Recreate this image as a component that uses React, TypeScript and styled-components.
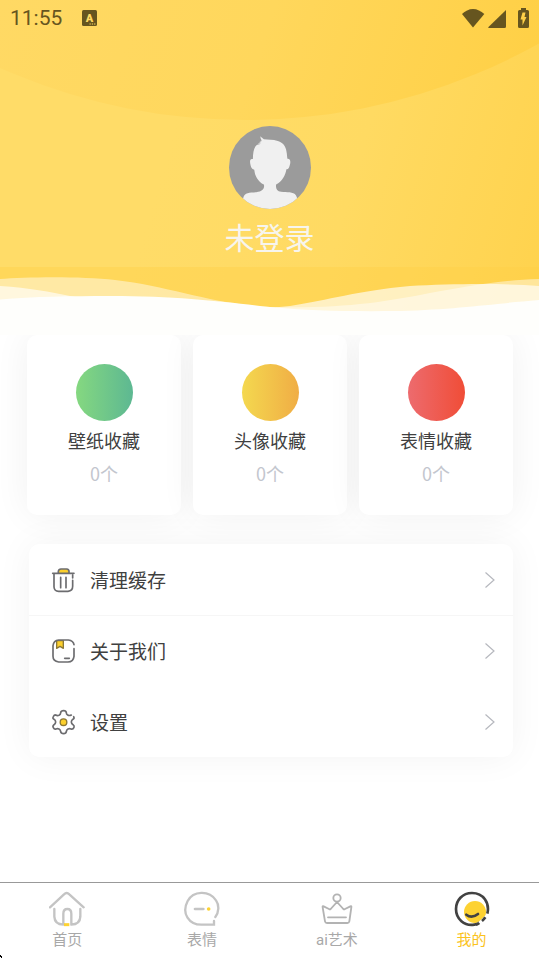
import React from "react";
import styled, { createGlobalStyle } from "styled-components";

const GlobalStyle = createGlobalStyle`
  *, *::before, *::after { box-sizing: border-box; }
  body {
    margin: 0;
    background: #fff;
    font-family: "Noto Sans CJK SC", sans-serif;
  }
  button {
    margin: 0;
    padding: 0;
    border: 0;
    background: none;
    color: inherit;
    font: inherit;
    cursor: pointer;
  }
  svg { display: block; flex: none; }
`;

const Page = styled.div`
  position: relative;
  display: flex;
  flex-direction: column;
  min-height: 100vh;
`;

const Hero = styled.header`
  position: relative;
  z-index: 1;
  padding-bottom: 79px;
  background: #fefefc;
`;

const HeroArt = styled.svg`
  position: absolute;
  inset: 0;
  width: 100%;
  height: 100%;
`;

const StatusBar = styled.div`
  position: relative;
  display: flex;
  align-items: center;
  height: 36px;
  padding: 0 10px;
  color: #66551f;
  font-family: Roboto, sans-serif;
  font-size: 21px;
  line-height: 36px;
`;

const Clock = styled.time`
  margin-right: 20px;
`;

const StatusIcons = styled.div`
  display: flex;
  align-items: center;
  margin-left: auto;
`;

const Profile = styled.button`
  position: relative;
  display: flex;
  flex-direction: column;
  align-items: center;
  gap: 7px;
  margin: 90px auto 0;
  color: #f7f5ee;
  font-size: 30px;
  line-height: 40px;
`;

const Content = styled.main`
  flex: 1;
  padding: 0 26px 40px 27px;
`;

const Cards = styled.section`
  display: grid;
  grid-template-columns: repeat(3, 1fr);
  gap: 12px;
`;

const Card = styled.button`
  display: flex;
  flex-direction: column;
  align-items: center;
  padding: 29px 0 25px;
  border-radius: 10px;
  background: #fff;
  box-shadow: 0 0 36px rgba(0, 0, 0, 0.06);
`;

const Dot = styled.span<{ $from: string; $to: string }>`
  width: 57px;
  height: 57px;
  margin-bottom: 3px;
  border-radius: 50%;
  background: linear-gradient(to right, ${(p) => p.$from}, ${(p) => p.$to});
`;

const CardTitle = styled.span`
  color: #404040;
  font-size: 18px;
  line-height: 32px;
`;

const CardCount = styled.span`
  color: #c3c6ce;
  font-size: 18px;
  line-height: 34px;
`;

const Menu = styled.section`
  margin: 29px 0 0 2px;
  border-radius: 10px;
  background: #fff;
  box-shadow: 0 0 36px rgba(0, 0, 0, 0.05);
`;

const MenuRow = styled.button<{ $divided?: boolean }>`
  display: flex;
  align-items: center;
  gap: 13px;
  width: 100%;
  height: 71px;
  padding: 0 17px 0 22px;
  border-top: ${(p) => (p.$divided ? "1px solid #f6f6f6" : "0")};
  color: #404040;
  font-size: 19px;
  line-height: 28px;
  text-align: left;
`;

const MenuLabel = styled.span`
  flex: 1;
`;

const TabBar = styled.nav`
  display: grid;
  grid-template-columns: repeat(4, 1fr);
  padding: 8px 0 9px;
  border-top: 1px solid #999;
  background: #fff;
`;

const Tab = styled.button<{ $active?: boolean }>`
  display: flex;
  flex-direction: column;
  align-items: center;
  gap: 4px;
  color: ${(p) => (p.$active ? "#fbc31c" : "#a8a8a8")};
  font-family: Roboto, "Noto Sans CJK SC", sans-serif;
  font-size: 15px;
  line-height: 18px;
`;

const CornerMark = styled.svg`
  position: absolute;
  left: 0;
  bottom: 0;
`;

const HeroBackground = () => (
  <HeroArt viewBox="0 0 539 335" preserveAspectRatio="none" aria-hidden="true">
    <defs>
      <linearGradient id="base" gradientUnits="userSpaceOnUse" x1="170" y1="140" x2="620" y2="270">
        <stop offset="0" stopColor="#ffdc68" />
        <stop offset="0.4" stopColor="#ffda62" />
        <stop offset="1" stopColor="#ffd046" />
      </linearGradient>
      <linearGradient id="arc" gradientUnits="userSpaceOnUse" x1="0" y1="0" x2="500" y2="160">
        <stop offset="0" stopColor="#ffd964" />
        <stop offset="0.5" stopColor="#ffd75c" />
        <stop offset="1" stopColor="#ffd046" />
      </linearGradient>
    </defs>
    <path fill="url(#base)" d="M0 0H539V320H0Z" />
    <circle cx="245" cy="-483" r="603" fill="url(#arc)" />
    <path fill="#ffcf45" fillOpacity="0.4" d="M0 267H539V320H0Z" />
    <path
      fill="#fff"
      fillOpacity="0.45"
      d="M0 279C25 277 80 276 115 280C170 286 210 304 270 307C340 309 385 302 430 293C470 286 500 280 539 279V335H0Z"
    />
    <path
      fill="#fff"
      fillOpacity="0.64"
      d="M0 286C30 288 50 292 70 296C130 308 240 312 290 306C330 300 355 291 410 286C450 284 500 283 539 286V335H0Z"
    />
    <path
      fill="#fefefc"
      d="M0 299.500C35 296.500 70 296 110 296C180 296 225 302 270 307C310 311 350 311.500 400 311C460 309 490 304 539 300V335H0Z"
    />
  </HeroArt>
);

const Avatar = () => (
  <svg width="82" height="83" viewBox="88 46 247 251" preserveAspectRatio="none" aria-hidden="true">
    <defs>
      <clipPath id="round">
        <ellipse cx="211.500" cy="171.500" rx="123.500" ry="125.500" />
      </clipPath>
    </defs>
    <g clipPath="url(#round)">
      <path fill="#9b9b9b" d="M88 46H335V297H88Z" />
      <path
        fill="#f0f0f0"
        d="M183 77C186 81 189 83 193 86C205 88 220 86 235 91C252 96 259 108 261 122C263 132 263 138 264 145C274 144 274 155 271 165C269 174 266 178 261 177C258 196 248 214 230 223C228 234 232 243 245 245C262 247 282 244 290 256L294 266L300 300H122L131 263C135 246 150 248 170 246C190 244 196 234 193 223C176 214 166 198 164 178C156 177 154 170 152 160C150 148 153 144 160 146C160 130 162 115 168 107C173 102 178 102 184 100L175 99C179 97 183 96 186 94L180 92L187 90C184 86 182 82 183 77Z"
      />
    </g>
  </svg>
);

const KeyboardIcon = () => (
  <svg width="15" height="16" viewBox="0 0 15 16" aria-hidden="true">
    <rect width="15" height="16" rx="1.500" fill="#66551f" />
    <text x="7.500" y="11.500" textAnchor="middle" fontFamily="Roboto" fontWeight="900" fontSize="11" fill="#ffda63">
      A
    </text>
    <path stroke="#ffda63" strokeDasharray="1.300 1" d="M7.500 14H14" />
  </svg>
);

const SignalIcons = () => (
  <svg width="68" height="22" viewBox="461 6 68 22" fill="#66551f" aria-hidden="true">
    <path d="M473 26.500L462 13C465 10 469 8 473 8S481 10 484.300 13Z" />
    <path d="M506 9V25.500Q506 27 504.500 27H489Q487.500 27 488.500 26Z" />
    <path d="M521 9V7H526V9H527.500Q529 9 529 10.500V25.500Q529 27 527.500 27H519.500Q518 27 518 25.500V10.500Q518 9 519.500 9Z" />
    <path fill="#ffd148" d="M522.500 11.500H525.500L524.500 16H526.500L522.500 24.500V18.500H520.500Z" />
  </svg>
);

const TrashIcon = () => (
  <svg width="26" height="26" viewBox="93 94 78 78" fill="none" stroke="#6c6c6f" strokeWidth="5" strokeLinecap="round" aria-hidden="true">
    <path fill="#fcd02d" d="M115 112V107Q116 100 123 100H140Q147 101 147 107V112" />
    <path d="M98 113H162M102 116V154Q103 167 116 167H144Q158 166 158 152V134M158 127V118M122 125V156M138 125V156" />
  </svg>
);

const BookIcon = () => (
  <svg width="26" height="26" viewBox="93 309 78 78" fill="none" stroke="#6c6c6f" strokeWidth="5" strokeLinecap="round" aria-hidden="true">
    <path fill="#fcd02d" stroke="#8c7835" strokeWidth="4" strokeLinejoin="round" d="M110 317H130V340L120 334L110 340Z" />
    <path d="M162 341V364Q160 381 144 381H116Q99 379 99 364V332Q101 316 116 315H145Q160 317 162 329M134 370H148" />
  </svg>
);

const GearIcon = () => (
  <svg width="26" height="26" viewBox="93 522 78 78" fill="none" stroke="#6c6c6f" strokeWidth="5" strokeLinecap="round" strokeLinejoin="round" aria-hidden="true">
    <path d="M154 540Q148 543 143 540Q139 538 139 533Q138 527 131 527Q123 527 122 533Q122 538 117 541Q112 543 107 540Q103 539 100 545Q97 550 102 553Q107 556 107 561Q107 566 102 569Q97 573 100 578Q103 584 108 582Q113 580 117 582Q122 585 122 590Q123 596 131 596Q138 596 139 590Q139 585 144 582Q149 580 153 582Q159 584 162 577Q164 573 159 569Q154 566 154 561Q154 556 159 553Q164 550 161 545" />
    <circle cx="130.500" cy="561.500" r="10" fill="#fcd02d" stroke="#8c7835" strokeWidth="4" />
  </svg>
);

const Chevron = () => (
  <svg width="12" height="18" viewBox="0 0 12 18" fill="none" stroke="#b6b8be" strokeWidth="1.200" aria-hidden="true">
    <path d="M1.500 1.500L10 9L1.500 16.500" />
  </svg>
);

const HomeIcon = () => (
  <svg width="36" height="36" viewBox="147 63 108 108" fill="none" stroke="#c4c4c4" strokeWidth="7" strokeLinecap="round" strokeLinejoin="round" aria-hidden="true">
    <path d="M150 112L192 73Q200 65 208 73L251 112" />
    <path d="M163 117V140Q164 163 190 164V131Q190 117 202 117Q214 117 214 131V164Q240 163 241 140V117" />
    <path stroke="#fdd232" strokeWidth="9" strokeLinecap="butt" d="M192 164H208" />
  </svg>
);

const FaceIcon = () => (
  <svg width="36" height="36" viewBox="551 63 108 108" fill="none" stroke="#c4c4c4" strokeWidth="7" strokeLinecap="round" aria-hidden="true">
    <path d="M645 141C656 127 657 105 647 91C626 60 579 62 562 93C542 131 567 164 603 164H641V153" />
    <path strokeWidth="8" d="M584 117H609" />
    <circle cx="625" cy="117" r="5.500" fill="#fdd232" stroke="none" />
  </svg>
);

const CrownIcon = () => (
  <svg width="36" height="36" viewBox="145 63 108 108" fill="none" stroke="#b3b3b3" strokeWidth="5.500" strokeLinecap="round" strokeLinejoin="round" aria-hidden="true">
    <circle cx="199" cy="84" r="11" />
    <path d="M199 96L180 117Q178 119 175 117L159 109Q155 107 156 112L163 154Q164 159 169 159H230Q235 159 236 154L242 112Q243 107 239 109L223 117Q220 119 218 117ZM172 142H226" />
  </svg>
);

const MeIcon = () => (
  <svg width="36" height="36" viewBox="549 63 108 108" fill="none" stroke="#424242" strokeWidth="8" strokeLinecap="butt" aria-hidden="true">
    <circle cx="612" cy="126" r="33" fill="#fdd232" stroke="none" />
    <path d="M649 131C657 98 637 69 603 69C574 69 555 91 555 117C555 147 580 169 610 164C616 163 621 161 626 158" />
    <path stroke="#fff" strokeWidth="10" d="M619 166L650 137" />
    <path strokeWidth="8" d="M633 153Q639 148 643 142M615 164Q620 163 625 159" />
    <path strokeLinecap="round" d="M586 134Q602 147 621 132" />
  </svg>
);

const cards = [
  { title: "壁纸收藏", from: "#85d880", to: "#5db892" },
  { title: "头像收藏", from: "#f4d84f", to: "#f0ad45" },
  { title: "表情收藏", from: "#ed6b6e", to: "#f04d37" },
];

const menu = [
  { label: "清理缓存", Icon: TrashIcon },
  { label: "关于我们", Icon: BookIcon, divided: true },
  { label: "设置", Icon: GearIcon },
];

const tabs = [
  { label: "首页", Icon: HomeIcon },
  { label: "表情", Icon: FaceIcon },
  { label: "ai艺术", Icon: CrownIcon },
  { label: "我的", Icon: MeIcon, active: true },
];

export default function App() {
  return (
    <Page>
      <GlobalStyle />
      <Hero>
        <HeroBackground />
        <StatusBar>
          <Clock>11:55</Clock>
          <KeyboardIcon />
          <StatusIcons>
            <SignalIcons />
          </StatusIcons>
        </StatusBar>
        <Profile type="button">
          <Avatar />
          <span>未登录</span>
        </Profile>
      </Hero>
      <Content>
        <Cards>
          {cards.map((c) => (
            <Card key={c.title} type="button">
              <Dot $from={c.from} $to={c.to} />
              <CardTitle>{c.title}</CardTitle>
              <CardCount>0个</CardCount>
            </Card>
          ))}
        </Cards>
        <Menu>
          {menu.map(({ label, Icon, divided }) => (
            <MenuRow key={label} type="button" $divided={divided}>
              <Icon />
              <MenuLabel>{label}</MenuLabel>
              <Chevron />
            </MenuRow>
          ))}
        </Menu>
      </Content>
      <TabBar>
        {tabs.map(({ label, Icon, active }) => (
          <Tab key={label} type="button" $active={active} aria-current={active ? "page" : undefined}>
            <Icon />
            <span>{label}</span>
          </Tab>
        ))}
      </TabBar>
      <CornerMark width="2" height="3" viewBox="0 0 2 3" aria-hidden="true">
        <path d="M0 0H1V1H2V3H1V2H0Z" />
      </CornerMark>
    </Page>
  );
}
